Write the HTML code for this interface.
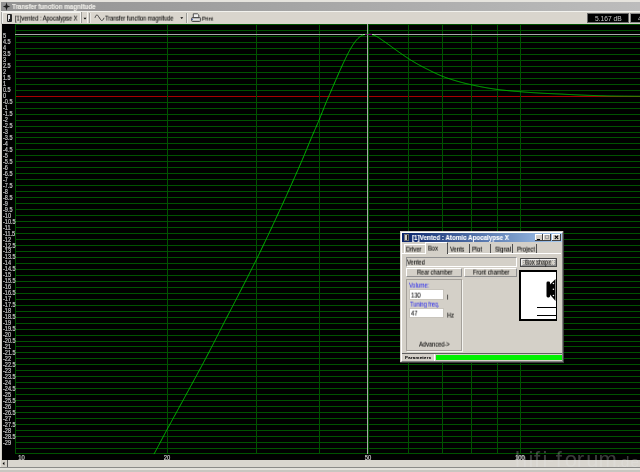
<!DOCTYPE html>
<html><head><meta charset="utf-8"><style>
*{margin:0;padding:0;box-sizing:border-box}
html,body{width:640px;height:472px;overflow:hidden;background:#d4d0c8;font-family:"Liberation Sans",sans-serif;position:relative}
.a{position:absolute}
svg{position:absolute;left:0;top:0;overflow:visible}
.t{position:absolute;white-space:nowrap;line-height:1;will-change:transform}
.k{-webkit-text-stroke:0.07px #000}
.n{transform:translateY(0.6px) scaleX(0.88);transform-origin:0 0}
.wm span{position:absolute;top:448.6px;font-size:22px;line-height:1;color:rgba(235,235,235,0.25)}
.yl text{font-size:6.6px;fill:#cacaca;stroke:#c0c0c0;stroke-width:0.22px;font-family:"Liberation Sans",sans-serif}
</style></head><body>
<!-- frame -->
<div class="a" style="left:0;top:0;width:640px;height:2px;background:#e6e4de"></div>
<div class="a" style="left:0;top:0;width:1px;height:472px;background:#e6e4de"></div>
<div class="a" style="left:1px;top:2px;width:639px;height:9px;background:linear-gradient(90deg,#929292,#bcbcbc)"></div>
<svg width="10" height="9" style="left:3px;top:2px"><path d="M3.5 0.3 L4.4 3.6 L7.2 4.5 L4.4 5.4 L3.5 8.7 L2.6 5.4 L-0.2 4.5 L2.6 3.6Z" fill="#1c1c1c"/></svg>
<div class="t" style="left:12px;top:3.6px;font-size:7.1px;font-weight:bold;color:#ecebe6;-webkit-text-stroke:0.15px #ecebe6;letter-spacing:-0.05px;transform:scaleX(0.885);transform-origin:0 0">Transfer function magnitude</div>
<div class="a" style="left:1px;top:11px;width:639px;height:1px;background:#f2f2ee"></div>
<!-- toolbar -->
<div class="a" style="left:2px;top:12px;width:638px;height:12px;background:#d9d5cd"></div>
<div class="a" style="left:1px;top:12px;width:1px;height:12px;background:#a8a8a4"></div>
<div class="a" style="left:2px;top:12px;width:79px;height:11px;border-top:1px solid #f4f4f0;border-left:1px solid #f4f4f0;border-right:1px solid #f4f4f0"></div>
<div class="a" style="left:6.8px;top:14.2px;width:5px;height:7.5px;background:#262626;border-radius:1px"></div>
<div class="a" style="left:8px;top:15px;width:2px;height:3.5px;background:#e4e4e4"></div><div class="a" style="left:8px;top:18.5px;width:1px;height:2.5px;background:#d0d0d0"></div>
<div class="t k n" style="left:15.0px;top:15.33px;font-size:6.44px;color:#000">[1]vented : Apocalypse X</div>
<div class="a" style="left:81px;top:12px;width:1px;height:11px;background:#9c9c98"></div>
<div class="a" style="left:87px;top:12px;width:1px;height:11px;background:#f4f4f0"></div>
<svg width="6" height="4" style="left:83px;top:17px"><path d="M0.5 0.8 H3.5 L2 2.4Z" fill="#000"/></svg>
<div class="a" style="left:89px;top:13px;width:1px;height:10px;background:#9c9c98"></div>
<div class="a" style="left:90px;top:13px;width:1px;height:10px;background:#ecebe6"></div>
<svg width="12" height="9" style="left:94px;top:13px"><path d="M1 4.8 C2 1.5, 3.3 1.2, 4.5 3.5 L6.5 6.5 C7.6 8.2, 9 7.8, 10 4.8" fill="none" stroke="#383838" stroke-width="0.95"/></svg>
<div class="t k n" style="left:105.0px;top:15.35px;font-size:6.27px;color:#000">Transfer function magnitude</div>
<svg width="6" height="4" style="left:180px;top:17px"><path d="M0.3 0.3 H3.2 L1.75 1.9Z" fill="#000"/></svg>
<div class="a" style="left:186px;top:13px;width:1px;height:10px;background:#9c9c98"></div>
<div class="a" style="left:187px;top:13px;width:1px;height:10px;background:#ecebe6"></div>
<svg width="12" height="11" style="left:191px;top:13px"><path d="M2.3 4.5 V0.8 H6.5 L7.8 2 V4.5" fill="#f0f0f0" stroke="#404040" stroke-width="0.9"/><rect x="0.6" y="4.5" width="9" height="4" rx="1" fill="#b8b8b8" stroke="#404040" stroke-width="0.9"/><rect x="1.5" y="6.3" width="7" height="0.9" fill="#f4f4f4"/><rect x="0.8" y="5.8" width="1" height="1" fill="#2040c0"/></svg>
<div class="t k n" style="left:202.0px;top:15.36px;font-size:6.10px;color:#000">Print</div>
<div class="a" style="left:587px;top:13px;width:42px;height:10px;background:#000;border:1px solid #6a6a6a"></div>
<div class="t" style="left:594.8px;top:15.5px;font-size:6.7px;color:#c8c8c8">5.167 dB</div>
<div class="a" style="left:630px;top:13px;width:12px;height:10px;background:#000;border:1px solid #8a8a8a"></div>
<div class="t" style="left:637.5px;top:15.5px;font-size:6.7px;color:#c8c8c8">4</div>
<!-- plot -->
<div class="a" style="left:2px;top:24px;width:638px;height:436px;background:#000"></div>
<svg width="640" height="472" shape-rendering="crispEdges"><rect x="15" y="24" width="625" height="1" fill="#005200"/><rect x="15" y="30" width="625" height="1" fill="#005200"/><rect x="15" y="36" width="625" height="1" fill="#005200"/><rect x="15" y="42" width="625" height="1" fill="#005200"/><rect x="15" y="48" width="625" height="1" fill="#005200"/><rect x="15" y="54" width="625" height="1" fill="#005200"/><rect x="15" y="60" width="625" height="1" fill="#005200"/><rect x="15" y="66" width="625" height="1" fill="#005200"/><rect x="15" y="72" width="625" height="1" fill="#005200"/><rect x="15" y="78" width="625" height="1" fill="#005200"/><rect x="15" y="84" width="625" height="1" fill="#005200"/><rect x="15" y="90" width="625" height="1" fill="#005200"/><rect x="15" y="96" width="625" height="1" fill="#a80000"/><rect x="15" y="102" width="625" height="1" fill="#005200"/><rect x="15" y="108" width="625" height="1" fill="#005200"/><rect x="15" y="114" width="625" height="1" fill="#005200"/><rect x="15" y="120" width="625" height="1" fill="#005200"/><rect x="15" y="126" width="625" height="1" fill="#005200"/><rect x="15" y="132" width="625" height="1" fill="#005200"/><rect x="15" y="137" width="625" height="1" fill="#005200"/><rect x="15" y="143" width="625" height="1" fill="#005200"/><rect x="15" y="149" width="625" height="1" fill="#005200"/><rect x="15" y="155" width="625" height="1" fill="#005200"/><rect x="15" y="161" width="625" height="1" fill="#005200"/><rect x="15" y="167" width="625" height="1" fill="#005200"/><rect x="15" y="173" width="625" height="1" fill="#005200"/><rect x="15" y="179" width="625" height="1" fill="#005200"/><rect x="15" y="185" width="625" height="1" fill="#005200"/><rect x="15" y="191" width="625" height="1" fill="#005200"/><rect x="15" y="197" width="625" height="1" fill="#005200"/><rect x="15" y="203" width="625" height="1" fill="#005200"/><rect x="15" y="209" width="625" height="1" fill="#005200"/><rect x="15" y="215" width="625" height="1" fill="#005200"/><rect x="15" y="221" width="625" height="1" fill="#005200"/><rect x="15" y="227" width="625" height="1" fill="#005200"/><rect x="15" y="233" width="625" height="1" fill="#005200"/><rect x="15" y="239" width="625" height="1" fill="#005200"/><rect x="15" y="245" width="625" height="1" fill="#005200"/><rect x="15" y="251" width="625" height="1" fill="#005200"/><rect x="15" y="257" width="625" height="1" fill="#005200"/><rect x="15" y="263" width="625" height="1" fill="#005200"/><rect x="15" y="269" width="625" height="1" fill="#005200"/><rect x="15" y="275" width="625" height="1" fill="#005200"/><rect x="15" y="281" width="625" height="1" fill="#005200"/><rect x="15" y="287" width="625" height="1" fill="#005200"/><rect x="15" y="293" width="625" height="1" fill="#005200"/><rect x="15" y="299" width="625" height="1" fill="#005200"/><rect x="15" y="305" width="625" height="1" fill="#005200"/><rect x="15" y="311" width="625" height="1" fill="#005200"/><rect x="15" y="317" width="625" height="1" fill="#005200"/><rect x="15" y="323" width="625" height="1" fill="#005200"/><rect x="15" y="329" width="625" height="1" fill="#005200"/><rect x="15" y="335" width="625" height="1" fill="#005200"/><rect x="15" y="341" width="625" height="1" fill="#005200"/><rect x="15" y="346" width="625" height="1" fill="#005200"/><rect x="15" y="352" width="625" height="1" fill="#005200"/><rect x="15" y="358" width="625" height="1" fill="#005200"/><rect x="15" y="364" width="625" height="1" fill="#005200"/><rect x="15" y="370" width="625" height="1" fill="#005200"/><rect x="15" y="376" width="625" height="1" fill="#005200"/><rect x="15" y="382" width="625" height="1" fill="#005200"/><rect x="15" y="388" width="625" height="1" fill="#005200"/><rect x="15" y="394" width="625" height="1" fill="#005200"/><rect x="15" y="400" width="625" height="1" fill="#005200"/><rect x="15" y="406" width="625" height="1" fill="#005200"/><rect x="15" y="412" width="625" height="1" fill="#005200"/><rect x="15" y="418" width="625" height="1" fill="#005200"/><rect x="15" y="424" width="625" height="1" fill="#005200"/><rect x="15" y="430" width="625" height="1" fill="#005200"/><rect x="15" y="436" width="625" height="1" fill="#005200"/><rect x="15" y="442" width="625" height="1" fill="#005200"/><rect x="15" y="448" width="625" height="1" fill="#005200"/><rect x="15" y="453" width="625" height="1" fill="#005200"/><rect x="15" y="24" width="1" height="430" fill="#005200"/><rect x="167" y="24" width="1" height="430" fill="#005200"/><rect x="256" y="24" width="1" height="430" fill="#005200"/><rect x="319" y="24" width="1" height="430" fill="#005200"/><rect x="368" y="24" width="1" height="430" fill="#005200"/><rect x="408" y="24" width="1" height="430" fill="#005200"/><rect x="442" y="24" width="1" height="430" fill="#005200"/><rect x="471" y="24" width="1" height="430" fill="#005200"/><rect x="497" y="24" width="1" height="430" fill="#005200"/><rect x="520" y="24" width="1" height="430" fill="#005200"/><rect x="367" y="24" width="1" height="430" fill="#a8a8a8"/><rect x="15" y="34" width="625" height="1" fill="#a8a8a8"/></svg>
<svg width="640" height="472"><polyline points="154.0,454.08 154.5,453.15 155.0,452.22 155.5,451.28 156.0,450.34 156.5,449.40 157.0,448.46 157.5,447.52 158.0,446.57 158.5,445.63 159.0,444.69 159.5,443.74 160.0,442.80 160.5,441.85 161.0,440.91 161.5,439.97 162.0,439.02 162.5,438.08 163.0,437.13 163.5,436.19 164.0,435.24 164.5,434.30 165.0,433.36 165.5,432.42 166.0,431.48 166.5,430.55 167.0,429.62 167.5,428.69 168.0,427.76 168.5,426.84 169.0,425.92 169.5,425.01 170.0,424.09 170.5,423.18 171.0,422.27 171.5,421.36 172.0,420.44 172.5,419.53 173.0,418.62 173.5,417.71 174.0,416.80 174.5,415.89 175.0,414.98 175.5,414.06 176.0,413.15 176.5,412.24 177.0,411.33 177.5,410.41 178.0,409.50 178.5,408.59 179.0,407.67 179.5,406.76 180.0,405.85 180.5,404.93 181.0,404.02 181.5,403.10 182.0,402.19 182.5,401.27 183.0,400.36 183.5,399.44 184.0,398.53 184.5,397.61 185.0,396.70 185.5,395.78 186.0,394.86 186.5,393.95 187.0,393.03 187.5,392.11 188.0,391.19 188.5,390.28 189.0,389.36 189.5,388.44 190.0,387.52 190.5,386.60 191.0,385.68 191.5,384.76 192.0,383.84 192.5,382.92 193.0,382.00 193.5,381.08 194.0,380.16 194.5,379.24 195.0,378.32 195.5,377.40 196.0,376.47 196.5,375.55 197.0,374.63 197.5,373.71 198.0,372.78 198.5,371.86 199.0,370.93 199.5,370.01 200.0,369.08 200.5,368.16 201.0,367.23 201.5,366.31 202.0,365.38 202.5,364.45 203.0,363.52 203.5,362.58 204.0,361.64 204.5,360.70 205.0,359.76 205.5,358.81 206.0,357.86 206.5,356.91 207.0,355.95 207.5,354.99 208.0,354.03 208.5,353.07 209.0,352.10 209.5,351.14 210.0,350.17 210.5,349.21 211.0,348.24 211.5,347.27 212.0,346.31 212.5,345.34 213.0,344.37 213.5,343.40 214.0,342.43 214.5,341.45 215.0,340.48 215.5,339.50 216.0,338.53 216.5,337.55 217.0,336.57 217.5,335.59 218.0,334.61 218.5,333.63 219.0,332.64 219.5,331.66 220.0,330.67 220.5,329.69 221.0,328.70 221.5,327.72 222.0,326.73 222.5,325.75 223.0,324.76 223.5,323.78 224.0,322.80 224.5,321.82 225.0,320.84 225.5,319.87 226.0,318.90 226.5,317.94 227.0,316.97 227.5,316.01 228.0,315.05 228.5,314.10 229.0,313.14 229.5,312.18 230.0,311.22 230.5,310.27 231.0,309.31 231.5,308.35 232.0,307.39 232.5,306.43 233.0,305.47 233.5,304.51 234.0,303.54 234.5,302.58 235.0,301.61 235.5,300.65 236.0,299.68 236.5,298.72 237.0,297.75 237.5,296.78 238.0,295.81 238.5,294.84 239.0,293.87 239.5,292.90 240.0,291.93 240.5,290.95 241.0,289.98 241.5,289.00 242.0,288.03 242.5,287.05 243.0,286.07 243.5,285.09 244.0,284.11 244.5,283.13 245.0,282.15 245.5,281.17 246.0,280.18 246.5,279.20 247.0,278.21 247.5,277.23 248.0,276.24 248.5,275.25 249.0,274.26 249.5,273.27 250.0,272.28 250.5,271.29 251.0,270.29 251.5,269.30 252.0,268.30 252.5,267.30 253.0,266.30 253.5,265.30 254.0,264.30 254.5,263.30 255.0,262.30 255.5,261.29 256.0,260.29 256.5,259.28 257.0,258.27 257.5,257.26 258.0,256.25 258.5,255.23 259.0,254.21 259.5,253.19 260.0,252.17 260.5,251.14 261.0,250.11 261.5,249.07 262.0,248.03 262.5,246.99 263.0,245.95 263.5,244.90 264.0,243.86 264.5,242.81 265.0,241.76 265.5,240.71 266.0,239.65 266.5,238.60 267.0,237.54 267.5,236.48 268.0,235.43 268.5,234.36 269.0,233.30 269.5,232.24 270.0,231.17 270.5,230.11 271.0,229.04 271.5,227.97 272.0,226.90 272.5,225.83 273.0,224.75 273.5,223.68 274.0,222.60 274.5,221.53 275.0,220.45 275.5,219.38 276.0,218.30 276.5,217.23 277.0,216.15 277.5,215.07 278.0,214.00 278.5,212.92 279.0,211.84 279.5,210.75 280.0,209.67 280.5,208.58 281.0,207.50 281.5,206.41 282.0,205.31 282.5,204.22 283.0,203.13 283.5,202.03 284.0,200.93 284.5,199.83 285.0,198.73 285.5,197.63 286.0,196.53 286.5,195.42 287.0,194.32 287.5,193.21 288.0,192.10 288.5,190.99 289.0,189.88 289.5,188.76 290.0,187.65 290.5,186.53 291.0,185.41 291.5,184.29 292.0,183.17 292.5,182.05 293.0,180.92 293.5,179.80 294.0,178.67 294.5,177.55 295.0,176.42 295.5,175.29 296.0,174.16 296.5,173.03 297.0,171.90 297.5,170.77 298.0,169.63 298.5,168.49 299.0,167.35 299.5,166.20 300.0,165.05 300.5,163.90 301.0,162.74 301.5,161.57 302.0,160.40 302.5,159.23 303.0,158.04 303.5,156.85 304.0,155.66 304.5,154.46 305.0,153.25 305.5,152.05 306.0,150.84 306.5,149.62 307.0,148.41 307.5,147.19 308.0,145.97 308.5,144.76 309.0,143.55 309.5,142.34 310.0,141.13 310.5,139.94 311.0,138.75 311.5,137.57 312.0,136.40 312.5,135.24 313.0,134.09 313.5,132.94 314.0,131.80 314.5,130.66 315.0,129.52 315.5,128.37 316.0,127.23 316.5,126.08 317.0,124.93 317.5,123.76 318.0,122.59 318.5,121.40 319.0,120.20 319.5,118.98 320.0,117.75 320.5,116.51 321.0,115.25 321.5,113.99 322.0,112.72 322.5,111.44 323.0,110.17 323.5,108.89 324.0,107.63 324.5,106.37 325.0,105.13 325.5,103.91 326.0,102.70 326.5,101.51 327.0,100.34 327.5,99.18 328.0,98.03 328.5,96.88 329.0,95.74 329.5,94.59 330.0,93.44 330.5,92.29 331.0,91.13 331.5,89.97 332.0,88.81 332.5,87.64 333.0,86.48 333.5,85.32 334.0,84.17 334.5,83.01 335.0,81.86 335.5,80.71 336.0,79.56 336.5,78.41 337.0,77.26 337.5,76.11 338.0,74.96 338.5,73.81 339.0,72.67 339.5,71.53 340.0,70.39 340.5,69.27 341.0,68.15 341.5,67.04 342.0,65.94 342.5,64.85 343.0,63.76 343.5,62.68 344.0,61.61 344.5,60.55 345.0,59.50 345.5,58.46 346.0,57.43 346.5,56.41 347.0,55.40 347.5,54.41 348.0,53.44 348.5,52.48 349.0,51.54 349.5,50.62 350.0,49.71 350.5,48.83 351.0,47.97 351.5,47.13 352.0,46.30 352.5,45.51 353.0,44.73 353.5,43.98 354.0,43.25 354.5,42.55 355.0,41.87 355.5,41.22 356.0,40.61 356.5,40.02 357.0,39.46 357.5,38.93 358.0,38.43 358.5,37.96 359.0,37.51 359.5,37.10 360.0,36.71 360.5,36.35 361.0,36.02 361.5,35.72 362.0,35.45 362.5,35.21 363.0,34.99 363.5,34.81 364.0,34.65 364.5,34.51 365.0,34.40 365.5,34.31 366.0,34.24 366.5,34.19 367.0,34.15 367.5,34.14 368.0,34.13 368.5,34.14 369.0,34.17 369.5,34.21 370.0,34.26 370.5,34.33 371.0,34.41 371.5,34.51 372.0,34.63 372.5,34.76 373.0,34.91 373.5,35.07 374.0,35.26 374.5,35.46 375.0,35.67 375.5,35.91 376.0,36.16 376.5,36.42 377.0,36.70 377.5,36.99 378.0,37.29 378.5,37.61 379.0,37.93 379.5,38.26 380.0,38.59 380.5,38.93 381.0,39.27 381.5,39.62 382.0,39.96 382.5,40.31 383.0,40.65 383.5,40.99 384.0,41.34 384.5,41.68 385.0,42.03 385.5,42.37 386.0,42.72 386.5,43.08 387.0,43.43 387.5,43.79 388.0,44.15 388.5,44.51 389.0,44.88 389.5,45.24 390.0,45.61 390.5,45.98 391.0,46.35 391.5,46.72 392.0,47.09 392.5,47.45 393.0,47.82 393.5,48.19 394.0,48.55 394.5,48.91 395.0,49.28 395.5,49.64 396.0,50.00 396.5,50.36 397.0,50.71 397.5,51.07 398.0,51.43 398.5,51.78 399.0,52.14 399.5,52.49 400.0,52.84 400.5,53.20 401.0,53.55 401.5,53.89 402.0,54.24 402.5,54.59 403.0,54.93 403.5,55.27 404.0,55.61 404.5,55.95 405.0,56.29 405.5,56.63 406.0,56.96 406.5,57.29 407.0,57.62 407.5,57.95 408.0,58.28 408.5,58.60 409.0,58.92 409.5,59.24 410.0,59.56 410.5,59.87 411.0,60.18 411.5,60.50 412.0,60.80 412.5,61.11 413.0,61.41 413.5,61.72 414.0,62.02 414.5,62.31 415.0,62.61 415.5,62.90 416.0,63.19 416.5,63.48 417.0,63.77 417.5,64.05 418.0,64.33 418.5,64.61 419.0,64.89 419.5,65.16 420.0,65.44 420.5,65.71 421.0,65.98 421.5,66.24 422.0,66.51 422.5,66.77 423.0,67.03 423.5,67.28 424.0,67.54 424.5,67.79 425.0,68.05 425.5,68.30 426.0,68.55 426.5,68.80 427.0,69.04 427.5,69.29 428.0,69.55 428.5,69.80 429.0,70.05 429.5,70.30 430.0,70.55 430.5,70.81 431.0,71.06 431.5,71.31 432.0,71.56 432.5,71.80 433.0,72.05 433.5,72.29 434.0,72.53 434.5,72.77 435.0,73.01 435.5,73.25 436.0,73.48 436.5,73.71 437.0,73.94 437.5,74.17 438.0,74.40 438.5,74.62 439.0,74.84 439.5,75.06 440.0,75.28 440.5,75.49 441.0,75.70 441.5,75.91 442.0,76.11 442.5,76.31 443.0,76.50 443.5,76.69 444.0,76.88 444.5,77.07 445.0,77.25 445.5,77.43 446.0,77.61 446.5,77.79 447.0,77.96 447.5,78.13 448.0,78.30 448.5,78.47 449.0,78.64 449.5,78.81 450.0,78.97 450.5,79.14 451.0,79.30 451.5,79.46 452.0,79.62 452.5,79.78 453.0,79.93 453.5,80.09 454.0,80.24 454.5,80.39 455.0,80.54 455.5,80.69 456.0,80.84 456.5,80.99 457.0,81.13 457.5,81.28 458.0,81.42 458.5,81.56 459.0,81.70 459.5,81.84 460.0,81.97 460.5,82.11 461.0,82.24 461.5,82.38 462.0,82.51 462.5,82.64 463.0,82.77 463.5,82.90 464.0,83.02 464.5,83.15 465.0,83.27 465.5,83.40 466.0,83.52 466.5,83.64 467.0,83.76 467.5,83.88 468.0,84.00 468.5,84.11 469.0,84.23 469.5,84.34 470.0,84.46 470.5,84.57 471.0,84.68 471.5,84.80 472.0,84.91 472.5,85.02 473.0,85.13 473.5,85.24 474.0,85.35 474.5,85.46 475.0,85.56 475.5,85.67 476.0,85.77 476.5,85.88 477.0,85.98 477.5,86.08 478.0,86.18 478.5,86.28 479.0,86.38 479.5,86.48 480.0,86.58 480.5,86.68 481.0,86.77 481.5,86.87 482.0,86.96 482.5,87.06 483.0,87.15 483.5,87.24 484.0,87.33 484.5,87.42 485.0,87.51 485.5,87.60 486.0,87.68 486.5,87.77 487.0,87.86 487.5,87.94 488.0,88.03 488.5,88.11 489.0,88.19 489.5,88.27 490.0,88.35 490.5,88.43 491.0,88.51 491.5,88.59 492.0,88.67 492.5,88.75 493.0,88.83 493.5,88.90 494.0,88.98 494.5,89.05 495.0,89.12 495.5,89.19 496.0,89.26 496.5,89.33 497.0,89.40 497.5,89.47 498.0,89.53 498.5,89.59 499.0,89.65 499.5,89.72 500.0,89.77 500.5,89.83 501.0,89.89 501.5,89.95 502.0,90.01 502.5,90.06 503.0,90.12 503.5,90.17 504.0,90.23 504.5,90.28 505.0,90.33 505.5,90.38 506.0,90.44 506.5,90.49 507.0,90.54 507.5,90.59 508.0,90.64 508.5,90.69 509.0,90.74 509.5,90.78 510.0,90.83 510.5,90.88 511.0,90.92 511.5,90.97 512.0,91.02 512.5,91.06 513.0,91.10 513.5,91.15 514.0,91.19 514.5,91.24 515.0,91.28 515.5,91.32 516.0,91.36 516.5,91.40 517.0,91.44 517.5,91.48 518.0,91.52 518.5,91.56 519.0,91.60 519.5,91.64 520.0,91.68 520.5,91.73 521.0,91.77 521.5,91.81 522.0,91.85 522.5,91.89 523.0,91.93 523.5,91.97 524.0,92.01 524.5,92.05 525.0,92.09 525.5,92.13 526.0,92.16 526.5,92.20 527.0,92.24 527.5,92.28 528.0,92.31 528.5,92.35 529.0,92.39 529.5,92.42 530.0,92.46 530.5,92.49 531.0,92.53 531.5,92.56 532.0,92.60 532.5,92.63 533.0,92.67 533.5,92.70 534.0,92.73 534.5,92.76 535.0,92.80 535.5,92.83 536.0,92.86 536.5,92.89 537.0,92.92 537.5,92.95 538.0,92.98 538.5,93.01 539.0,93.04 539.5,93.07 540.0,93.10 540.5,93.13 541.0,93.15 541.5,93.18 542.0,93.21 542.5,93.24 543.0,93.26 543.5,93.29 544.0,93.31 544.5,93.34 545.0,93.36 545.5,93.39 546.0,93.41 546.5,93.44 547.0,93.46 547.5,93.48 548.0,93.51 548.5,93.53 549.0,93.55 549.5,93.58 550.0,93.60 550.5,93.62 551.0,93.64 551.5,93.67 552.0,93.69 552.5,93.71 553.0,93.73 553.5,93.75 554.0,93.77 554.5,93.79 555.0,93.81 555.5,93.83 556.0,93.85 556.5,93.87 557.0,93.89 557.5,93.91 558.0,93.93 558.5,93.95 559.0,93.97 559.5,93.99 560.0,94.02 560.5,94.04 561.0,94.07 561.5,94.09 562.0,94.12 562.5,94.14 563.0,94.17 563.5,94.20 564.0,94.22 564.5,94.25 565.0,94.28 565.5,94.30 566.0,94.33 566.5,94.36 567.0,94.38 567.5,94.41 568.0,94.43 568.5,94.46 569.0,94.48 569.5,94.51 570.0,94.53 570.5,94.56 571.0,94.58 571.5,94.61 572.0,94.63 572.5,94.66 573.0,94.68 573.5,94.70 574.0,94.73 574.5,94.75 575.0,94.77 575.5,94.80 576.0,94.82 576.5,94.84 577.0,94.87 577.5,94.89 578.0,94.91 578.5,94.93 579.0,94.95 579.5,94.98 580.0,95.00 580.5,95.02 581.0,95.04 581.5,95.06 582.0,95.08 582.5,95.10 583.0,95.12 583.5,95.14 584.0,95.16 584.5,95.18 585.0,95.20 585.5,95.21 586.0,95.23 586.5,95.25 587.0,95.27 587.5,95.29 588.0,95.31 588.5,95.32 589.0,95.34 589.5,95.36 590.0,95.38 590.5,95.40 591.0,95.41 591.5,95.43 592.0,95.45 592.5,95.46 593.0,95.48 593.5,95.50 594.0,95.51 594.5,95.53 595.0,95.55 595.5,95.56 596.0,95.58 596.5,95.60 597.0,95.61 597.5,95.63 598.0,95.65 598.5,95.66 599.0,95.68 599.5,95.69 600.0,95.71 600.5,95.72 601.0,95.74 601.5,95.75 602.0,95.77 602.5,95.78 603.0,95.80 603.5,95.81 604.0,95.83 604.5,95.84 605.0,95.86 605.5,95.87 606.0,95.89 606.5,95.90 607.0,95.92 607.5,95.93 608.0,95.94 608.5,95.95 609.0,95.97 609.5,95.98 610.0,95.99 610.5,96.00 611.0,96.01 611.5,96.02 612.0,96.02 612.5,96.03 613.0,96.04 613.5,96.04 614.0,96.05 614.5,96.05 615.0,96.06 615.5,96.07 616.0,96.07 616.5,96.08 617.0,96.08 617.5,96.09 618.0,96.09 618.5,96.10 619.0,96.10 619.5,96.11 620.0,96.11 620.5,96.12 621.0,96.12 621.5,96.13 622.0,96.13 622.5,96.14 623.0,96.14 623.5,96.15 624.0,96.15 624.5,96.16 625.0,96.16 625.5,96.16 626.0,96.17 626.5,96.17 627.0,96.18 627.5,96.18 628.0,96.18 628.5,96.19 629.0,96.19 629.5,96.20 630.0,96.20 630.5,96.20 631.0,96.21 631.5,96.21 632.0,96.22 632.5,96.22 633.0,96.22 633.5,96.23 634.0,96.23 634.5,96.24 635.0,96.24 635.5,96.24 636.0,96.25 636.5,96.25 637.0,96.25 637.5,96.26 638.0,96.26 638.5,96.26 639.0,96.27 639.5,96.27 640.0,96.27 640.5,96.28" fill="none" stroke="#00bc00" stroke-width="1.0"/></svg>
<svg width="640" height="472" shape-rendering="crispEdges"><rect x="363" y="34" width="2" height="1" fill="#a0e8a0"/><rect x="365" y="34" width="2" height="1" fill="#800080"/><rect x="368" y="34" width="4" height="1" fill="#800080"/><rect x="372" y="34" width="2" height="1" fill="#a0e8a0"/></svg>
<svg class="yl" width="640" height="472" style="will-change:transform"><g transform="translate(3,0) scale(0.84,1)"><text x="0" y="38.5">5</text><text x="0" y="44.5">4.5</text><text x="0" y="50.5">4</text><text x="0" y="56.5">3.5</text><text x="0" y="62.4">3</text><text x="0" y="68.4">2.5</text><text x="0" y="74.4">2</text><text x="0" y="80.3">1.5</text><text x="0" y="86.3">1</text><text x="0" y="92.3">0.5</text><text x="0" y="98.3">0</text><text x="0" y="104.2">-0.5</text><text x="0" y="110.2">-1</text><text x="0" y="116.2">-1.5</text><text x="0" y="122.2">-2</text><text x="0" y="128.1">-2.5</text><text x="0" y="134.1">-3</text><text x="0" y="140.1">-3.5</text><text x="0" y="146.0">-4</text><text x="0" y="152.0">-4.5</text><text x="0" y="158.0">-5</text><text x="0" y="164.0">-5.5</text><text x="0" y="169.9">-6</text><text x="0" y="175.9">-6.5</text><text x="0" y="181.9">-7</text><text x="0" y="187.8">-7.5</text><text x="0" y="193.8">-8</text><text x="0" y="199.8">-8.5</text><text x="0" y="205.8">-9</text><text x="0" y="211.7">-9.5</text><text x="0" y="217.7">-10</text><text x="0" y="223.7">-10.5</text><text x="0" y="229.7">-11</text><text x="0" y="235.6">-11.5</text><text x="0" y="241.6">-12</text><text x="0" y="247.6">-12.5</text><text x="0" y="253.5">-13</text><text x="0" y="259.5">-13.5</text><text x="0" y="265.5">-14</text><text x="0" y="271.5">-14.5</text><text x="0" y="277.4">-15</text><text x="0" y="283.4">-15.5</text><text x="0" y="289.4">-16</text><text x="0" y="295.4">-16.5</text><text x="0" y="301.3">-17</text><text x="0" y="307.3">-17.5</text><text x="0" y="313.3">-18</text><text x="0" y="319.2">-18.5</text><text x="0" y="325.2">-19</text><text x="0" y="331.2">-19.5</text><text x="0" y="337.2">-20</text><text x="0" y="343.1">-20.5</text><text x="0" y="349.1">-21</text><text x="0" y="355.1">-21.5</text><text x="0" y="361.0">-22</text><text x="0" y="367.0">-22.5</text><text x="0" y="373.0">-23</text><text x="0" y="379.0">-23.5</text><text x="0" y="384.9">-24</text><text x="0" y="390.9">-24.5</text><text x="0" y="396.9">-25</text><text x="0" y="402.9">-25.5</text><text x="0" y="408.8">-26</text><text x="0" y="414.8">-26.5</text><text x="0" y="420.8">-27</text><text x="0" y="426.7">-27.5</text><text x="0" y="432.7">-28</text><text x="0" y="438.7">-28.5</text><text x="0" y="444.7">-29</text></g><g transform="scale(0.88,1)"><text x="24.43" y="459.7" text-anchor="middle">10</text><text x="189.77" y="459.7" text-anchor="middle">20</text><text x="418.18" y="459.7" text-anchor="middle">50</text><text x="590.91" y="459.7" text-anchor="middle">100</text></g></svg>
<!-- scrollbar -->
<div class="a" style="left:2px;top:460px;width:638px;height:7px;background:#d9d6cf"></div>
<div class="a" style="left:2px;top:460px;width:6px;height:7px;background:#d4d0c8;border-right:1px solid #5a5a5a"></div>
<svg width="6" height="6" style="left:2px;top:461px"><path d="M0.6 2.5 L2.4 0.8 V4.2Z" fill="#000"/></svg>
<div class="a" style="left:0;top:467px;width:640px;height:1px;background:#8a8a88"></div>
<div class="a" style="left:0;top:468px;width:640px;height:2px;background:#e4e2dc"></div>
<div class="a" style="left:0;top:470px;width:640px;height:2px;background:#c8c6c0"></div>

<!-- dialog -->
<div class="a" style="left:400px;top:231px;width:164px;height:132px;background:#d4d0c8;border-right:1px solid #404040;border-bottom:1px solid #404040"></div>
<div class="a" style="left:401px;top:232px;width:162px;height:130px;border-left:1px solid #fff;border-top:1px solid #fff;border-right:1px solid #808080;border-bottom:1px solid #808080"></div>
<div class="a" style="left:402px;top:233px;width:160px;height:9px;background:linear-gradient(90deg,#0a246a,#a6caf0)"></div>
<div class="a" style="left:404px;top:234px;width:5px;height:7px;background:#202020;border:1px solid #707070"></div>
<div class="a" style="left:405px;top:235px;width:1.5px;height:5px;background:#d0d0d0"></div>
<div class="t" style="left:412px;top:234.2px;font-size:7.05px;font-weight:bold;color:#fff;-webkit-text-stroke:0.12px #fff;transform:scaleX(0.885);transform-origin:0 0">[1]Vented : Atomic Apocalypse X</div>
<div class="a" style="left:535px;top:234px;width:8px;height:7px;background:#d4d0c8;border-right:1px solid #404040;border-bottom:1px solid #404040;box-shadow:inset 1px 1px #fff"></div>
<div class="a" style="left:537px;top:238.5px;width:3px;height:1.2px;background:#000"></div>
<div class="a" style="left:543px;top:234px;width:8px;height:7px;background:#d4d0c8;border-right:1px solid #404040;border-bottom:1px solid #404040;box-shadow:inset 1px 1px #fff"></div>
<div class="a" style="left:544.5px;top:235.3px;width:4.5px;height:4px;border:1px solid #a0a0a0;border-top-width:1.3px"></div>
<div class="a" style="left:552px;top:234px;width:9px;height:7px;background:#d4d0c8;border-right:1px solid #404040;border-bottom:1px solid #404040;box-shadow:inset 1px 1px #fff"></div>
<svg width="9" height="7" style="left:552px;top:234px"><path d="M2.8 1.6 L6.2 4.9 M6.2 1.6 L2.8 4.9" stroke="#000" stroke-width="1.1"/></svg>
<!-- tabs -->
<div class="a" style="left:404px;top:244px;width:21px;height:10px;border-left:1px solid #fff;border-top:1px solid #fff;"></div>
<div class="t k n" style="left:405.6px;top:245.92px;font-size:6.55px;color:#000">Driver</div>
<div class="a" style="left:425px;top:242px;width:23px;height:12px;border-left:1px solid #fff;border-top:1px solid #fff;border-right:1px solid #404040"></div>
<div class="t k n" style="left:428.0px;top:244.52px;font-size:6.55px;color:#000">Box</div>
<div class="a" style="left:447px;top:244px;width:1px;height:9px;background:#505050"></div>
<div class="t k n" style="left:450.0px;top:245.92px;font-size:6.55px;color:#000">Vents</div>
<div class="a" style="left:469px;top:244px;width:1px;height:9px;background:#505050"></div>
<div class="t k n" style="left:472.0px;top:245.92px;font-size:6.55px;color:#000">Plot</div>
<div class="a" style="left:490px;top:244px;width:1px;height:9px;background:#505050"></div>
<div class="t k n" style="left:495.0px;top:245.92px;font-size:6.55px;color:#000">Signal</div>
<div class="a" style="left:512px;top:244px;width:1px;height:9px;background:#505050"></div>
<div class="t k n" style="left:517.0px;top:245.92px;font-size:6.55px;color:#000">Project</div>
<div class="a" style="left:536px;top:244px;width:1px;height:9px;background:#505050"></div>
<div class="a" style="left:402px;top:253px;width:23px;height:1px;background:#fff"></div>
<div class="a" style="left:448px;top:253px;width:113px;height:1px;background:#fff"></div>
<!-- Vented field -->
<div class="a" style="left:406px;top:257px;width:111px;height:10px;border-top:1px solid #909090;border-left:1px solid #909090;border-bottom:1px solid #fff;border-right:1px solid #fff"></div>
<div class="t k n" style="left:406.8px;top:258.72px;font-size:6.55px;color:#000">Vented</div>
<div class="a" style="left:520px;top:258px;width:37px;height:9px;border:1px solid #484848;border-radius:0.5px"></div>
<div class="a" style="left:521px;top:259px;width:35px;height:7px;border-left:1px solid #f0f0f0;border-top:1px solid #f0f0f0;border-right:1px solid #909090;border-bottom:1px solid #909090"></div>
<div class="a" style="left:522.5px;top:260px;width:32px;height:5px;border:0.6px dotted #a0a0a0"></div>
<div class="t k n" style="left:524.6px;top:259.44px;font-size:6.33px;color:#000">Box shape</div>
<!-- chamber buttons -->
<div class="a" style="left:406px;top:268px;width:56px;height:9px;border-left:1px solid #fff;border-top:1px solid #fff;border-right:1px solid #909090;border-bottom:1px solid #909090"></div>
<div class="t k n" style="left:417.0px;top:269.34px;font-size:6.38px;color:#000">Rear chamber</div>
<div class="a" style="left:464px;top:268px;width:53px;height:9px;border-left:1px solid #fff;border-top:1px solid #fff;border-right:1px solid #909090;border-bottom:1px solid #909090"></div>
<div class="t k n" style="left:472.5px;top:269.34px;font-size:6.38px;color:#000">Front chamber</div>
<!-- group -->
<div class="a" style="left:406px;top:279px;width:56px;height:72px;border:1px solid #a4a09a;box-shadow:1px 1px #f4f4f0"></div>
<div class="t n" style="left:409.3px;top:282.34px;font-size:6.33px;color:#2020f0">Volume:</div>
<div class="a" style="left:409px;top:289px;width:35px;height:11px;background:#fff;border:1px solid #c8c4bc"></div>
<div class="t k n" style="left:411.0px;top:291.52px;font-size:6.55px;color:#000">130</div>
<div class="t k n" style="left:446.6px;top:293.92px;font-size:6.55px;color:#000">l</div>
<div class="t n" style="left:409.6px;top:300.94px;font-size:6.33px;color:#2020f0">Tuning freq.</div>
<div class="a" style="left:409px;top:308px;width:35px;height:10px;background:#fff;border:1px solid #c8c4bc"></div>
<div class="t k n" style="left:410.8px;top:309.52px;font-size:6.55px;color:#000">47</div>
<div class="t k n" style="left:446.6px;top:311.72px;font-size:6.55px;color:#000">Hz</div>
<div class="t k n" style="left:419.0px;top:341.32px;font-size:6.50px;color:#000">Advanced-&gt;</div>
<!-- box image -->
<div class="a" style="left:519px;top:270px;width:38px;height:51px;background:#fff;border:2px solid #000;border-right-width:1.5px"></div>
<svg width="40" height="52" style="left:519px;top:270px"><rect x="27.5" y="11.5" width="3.6" height="16" rx="1.4" fill="#000"/><path d="M30.5 15 L36.5 9 V31 L30.5 24Z" fill="#000"/><circle cx="34.4" cy="13.5" r="0.8" fill="#fff"/><circle cx="34.4" cy="19.3" r="0.8" fill="#fff"/><circle cx="34.4" cy="25.5" r="0.8" fill="#fff"/><rect x="18" y="37" width="19" height="1" fill="#000"/><rect x="18" y="45" width="19" height="1" fill="#000"/></svg>
<!-- status -->
<div class="a" style="left:402px;top:353px;width:160px;height:1px;background:#606060"></div>
<div class="a" style="left:402px;top:354px;width:33px;height:7px;border-right:1px solid #fff"></div>
<div class="t k" style="left:405.4px;top:355.9px;font-size:4.3px;font-weight:bold;color:#000;letter-spacing:0.3px">Parameters</div>
<div class="a" style="left:436px;top:355px;width:126px;height:5px;background:#00f000"></div>

<div class="a wm" style="left:0;top:0"><span style="left:515px">h</span><span style="left:528.5px">i</span><span style="left:534px">f</span><span style="left:542.5px">i</span><span style="left:547px;opacity:0.4">-</span><span style="left:555.8px">f</span><span style="left:564.8px">o</span><span style="left:576.8px">r</span><span style="left:586.2px">u</span><span style="left:598.6px">m</span><span style="left:616.3px;font-size:15.5px;top:454px">.</span><span style="left:620.8px;font-size:15.5px;top:454px">d</span><span style="left:630.6px;font-size:15.5px;top:454px">e</span></div>
</body></html>
